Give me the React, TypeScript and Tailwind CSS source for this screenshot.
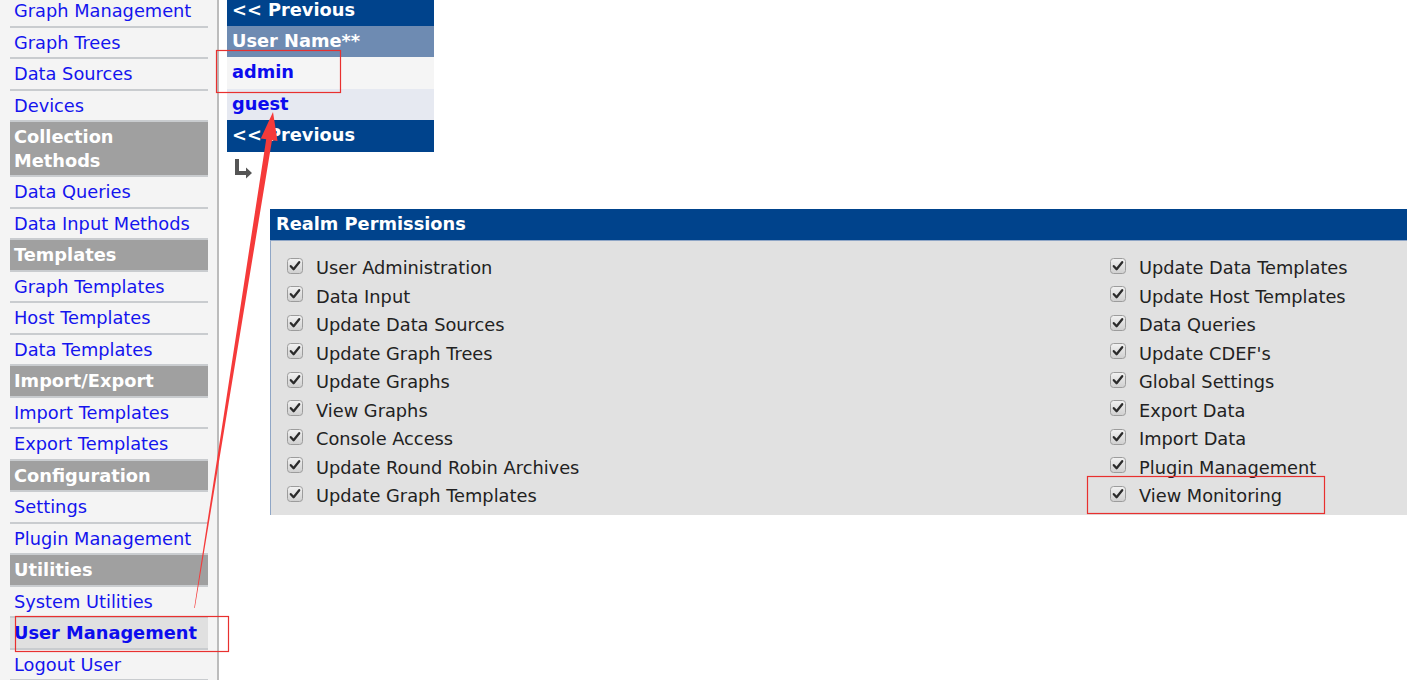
import React from "react";

type NavItem = { label: string; header?: boolean; active?: boolean; double?: boolean };

const nav: NavItem[] = [
  { label: "Graph Management" },
  { label: "Graph Trees" },
  { label: "Data Sources" },
  { label: "Devices" },
  { label: "Collection Methods", header: true, double: true },
  { label: "Data Queries" },
  { label: "Data Input Methods" },
  { label: "Templates", header: true },
  { label: "Graph Templates" },
  { label: "Host Templates" },
  { label: "Data Templates" },
  { label: "Import/Export", header: true },
  { label: "Import Templates" },
  { label: "Export Templates" },
  { label: "Configuration", header: true },
  { label: "Settings" },
  { label: "Plugin Management" },
  { label: "Utilities", header: true },
  { label: "System Utilities" },
  { label: "User Management", active: true },
  { label: "Logout User" },
];

const leftPerms = [
  "User Administration",
  "Data Input",
  "Update Data Sources",
  "Update Graph Trees",
  "Update Graphs",
  "View Graphs",
  "Console Access",
  "Update Round Robin Archives",
  "Update Graph Templates",
];

const rightPerms = [
  "Update Data Templates",
  "Update Host Templates",
  "Data Queries",
  "Update CDEF's",
  "Global Settings",
  "Export Data",
  "Import Data",
  "Plugin Management",
  "View Monitoring",
];

function CheckBox() {
  return (
    <svg width="16" height="16" viewBox="0 0 16 16" className="shrink-0">
      <defs>
        <linearGradient id="cbg" x1="0" y1="0" x2="0" y2="1">
          <stop offset="0" stopColor="#f2f2f2" />
          <stop offset="1" stopColor="#cfcfcf" />
        </linearGradient>
      </defs>
      <rect x="0.5" y="0.5" width="15" height="15" rx="3" fill="url(#cbg)" stroke="#9c9c9c" />
      <path d="M3.8 8.2 L6.6 11.2 L12.2 4.2" fill="none" stroke="#2b2b2b" strokeWidth="2.3" strokeLinecap="round" strokeLinejoin="round" />
    </svg>
  );
}

function PermRow({ label }: { label: string }) {
  return (
    <div className="h-[28.5px] flex items-center gap-[13px]">
      <div className="-mt-[6px]">
        <CheckBox />
      </div>
      <span className="text-[#222222] whitespace-nowrap">{label}</span>
    </div>
  );
}

export default function App() {
  return (
    <div className="relative w-[1407px] h-[680px] overflow-hidden bg-white flex font-['DejaVu_Sans',Verdana,sans-serif] text-[17.8px]">
      {/* Sidebar */}
      <div className="w-[219px] shrink-0 h-full bg-[#f4f4f4] border-r-2 border-[#bcbcbc] pl-[10px] pr-[9px]">
        <div className="-mt-[4px] flex flex-col">
          {nav.map((n) => {
            if (n.header) {
              return (
                <div
                  key={n.label}
                  className="bg-[#a0a0a0] border-b-2 border-[#c9cccf] px-[4px] py-[3px] leading-[23.5px] font-bold text-white"
                >
                  {n.double ? (
                    <>
                      Collection
                      <br />
                      Methods
                    </>
                  ) : (
                    n.label
                  )}
                </div>
              );
            }
            return (
              <div
                key={n.label}
                className={
                  n.active
                    ? "bg-[#e0e0e0] border-b-2 border-[#c9cccf] px-[4px] py-[3px] leading-[23.5px] font-bold text-[#0c0cee] whitespace-nowrap"
                    : "border-b-2 border-[#c9cccf] px-[4px] py-[3px] leading-[23.5px] text-[#1414ee] whitespace-nowrap"
                }
              >
                {n.label}
              </div>
            );
          })}
        </div>
      </div>

      {/* Main */}
      <div className="flex-1 pl-[8px] min-w-0">
        <div className="-mt-[5px] w-[207px] font-bold">
          <div className="h-[30.5px] bg-[#00438c] text-white px-[5px] flex items-center whitespace-nowrap">
            &lt;&lt; Previous
          </div>
          <div className="h-[31.5px] bg-[#6e8bb2] text-white px-[5px] flex items-center">User Name**</div>
          <div className="h-[31.5px] bg-[#f5f5f5] text-[#0c0cee] px-[5px] flex items-center">admin</div>
          <div className="h-[31.5px] bg-[#e6e9f1] text-[#0c0cee] px-[5px] flex items-center">guest</div>
          <div className="h-[31.5px] bg-[#00438c] text-white px-[5px] flex items-center whitespace-nowrap">
            &lt;&lt; Previous
          </div>
        </div>

        <div className="mt-[7px] ml-[6px] h-[20px]">
          <svg width="20" height="20" viewBox="0 0 20 20">
            <path d="M2 0 H6 V12 H13 V8.5 L19 14 L13 19.5 V16 H2 Z" fill="#555555" />
          </svg>
        </div>

        <div className="mt-[30px] ml-[43px] w-[1663px]">
          <div className="h-[31px] bg-[#00438c] text-white font-bold px-[6px] flex items-center">
            Realm Permissions
          </div>
          <div className="bg-[#e1e1e1] border-l border-t border-[#8fa6c6] pl-[16px] pt-[14px] pb-[4px] grid grid-cols-2">
            <div className="flex flex-col">
              {leftPerms.map((p) => (
                <PermRow key={p} label={p} />
              ))}
            </div>
            <div className="flex flex-col">
              {rightPerms.map((p) => (
                <PermRow key={p} label={p} />
              ))}
            </div>
          </div>
        </div>
      </div>

      {/* Annotation overlay */}
      <svg className="absolute inset-0 pointer-events-none" width="1407" height="680" viewBox="0 0 1407 680">
        <rect x="216.5" y="50.5" width="124" height="42" fill="none" stroke="#e8302f" strokeWidth="1.2" />
        <rect x="15.5" y="616.5" width="213" height="35" fill="none" stroke="#e8302f" strokeWidth="1.2" />
        <rect x="1087.5" y="476.5" width="237" height="37" fill="none" stroke="#e8302f" strokeWidth="1.2" />
        <polygon
          points="273,112 277.5,141 272,140.2 194.8,608.1 194.2,607.9 266.2,139.2 260.8,138.4"
          fill="#f53a3a"
        />
      </svg>
    </div>
  );
}
